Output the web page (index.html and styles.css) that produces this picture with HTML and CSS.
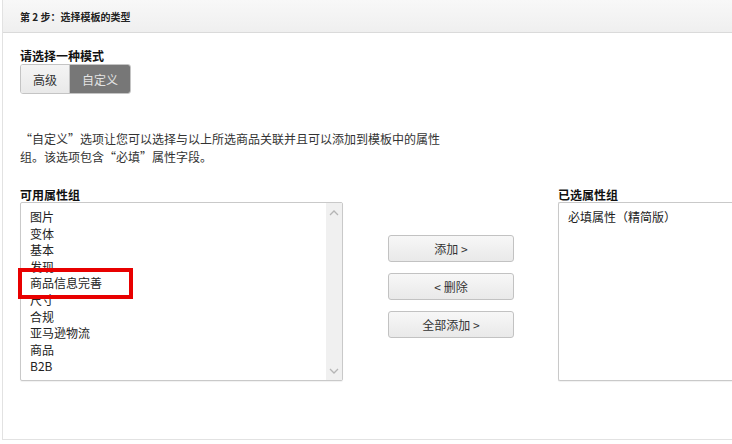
FILE: index.html
```html
<!DOCTYPE html>
<html lang="zh-CN">
<head>
<meta charset="utf-8">
<link rel="stylesheet" href="styles.css">
</head>
<body>
<div class="panel">
  <div class="panel-head">第 2 步：选择模板的类型</div>
  <div class="panel-body">
    <div class="label">请选择一种模式</div>
    <div class="toggle">
      <span class="seg">高级</span>
      <span class="seg active">自定义</span>
    </div>
    <p class="desc">“自定义”选项让您可以选择与以上所选商品关联并且可以添加到模板中的属性<br>组。该选项包含“必填”属性字段。</p>
    <div class="columns">
      <div class="col-left">
        <div class="label small">可用属性组</div>
        <div class="listbox">
          <ul class="items">
            <li>图片</li>
            <li>变体</li>
            <li>基本</li>
            <li>发现</li>
            <li>商品信息完善</li>
            <li>尺寸</li>
            <li>合规</li>
            <li>亚马逊物流</li>
            <li>商品</li>
            <li>B2B</li>
          </ul>
          <div class="scrollbar">
            <svg class="arrow" width="10" height="6" viewBox="0 0 10 6"><path d="M1 5 L5 1 L9 5" fill="none" stroke="#b5b5b5" stroke-width="1.3"/></svg>
            <svg class="arrow" width="10" height="6" viewBox="0 0 10 6"><path d="M1 1 L5 5 L9 1" fill="none" stroke="#b5b5b5" stroke-width="1.3"/></svg>
          </div>
          <div class="highlight"></div>
        </div>
      </div>
      <div class="col-mid">
        <button class="btn">添加 &gt;</button>
        <button class="btn">&lt; 删除</button>
        <button class="btn">全部添加 &gt;</button>
      </div>
      <div class="col-right">
        <div class="label small">已选属性组</div>
        <div class="listbox selected">
          <ul class="items">
            <li>必填属性（精简版）</li>
          </ul>
        </div>
      </div>
    </div>
  </div>
</div>
</body>
</html>
```
FILE: styles.css
```css
html, body {
  margin: 0;
  padding: 0;
  background: #fff;
}
body {
  font-family: "Noto Sans CJK SC", "Liberation Sans", sans-serif;
  color: #333;
  font-size: 12px;
  width: 732px;
  height: 444px;
  overflow: hidden;
}
.panel {
  margin-left: 2px;
  width: 730px;
  height: 440px;
  border-left: 1px solid #e2e2e2;
  border-bottom: 1px solid #e2e2e2;
  box-sizing: border-box;
}
.panel-head {
  height: 32px;
  line-height: 34px;
  background: linear-gradient(#f8f8f8, #efefef);
  border-bottom: 1px solid #dadada;
  padding-left: 17px;
  font-size: 10px;
  font-weight: bold;
  color: #222;
}
.panel-body {
  padding: 15px 0 0 17px;
}
.label {
  font-weight: bold;
  font-size: 12px;
  line-height: 16px;
  color: #111;
}
.label.small {
  line-height: 14px;
}
.toggle {
  display: inline-flex;
  border: 1px solid #c4c4c4;
  border-radius: 3px;
  overflow: hidden;
  height: 28px;
}
.seg {
  display: flex;
  align-items: center;
  justify-content: center;
  font-size: 12px;
}
.seg:first-child {
  width: 48px;
  background: linear-gradient(#f4f4f4, #e9e9e9);
  color: #333;
  border-right: 1px solid #c4c4c4;
}
.seg.active {
  width: 60px;
  background: #777;
  color: #e4e4e4;
}
.desc {
  margin: 36px 0 0 0;
  font-size: 12px;
  line-height: 18px;
  color: #333;
}
.columns {
  display: flex;
  margin-top: 22px;
}
.col-left {
  width: 323px;
}
.listbox {
  position: relative;
  display: flex;
  height: 179px;
  border: 1px solid #c9c9c9;
  border-radius: 2px;
  box-sizing: border-box;
  box-shadow: 0 1px 1px rgba(0,0,0,0.06);
  background: #fff;
}
.items {
  list-style: none;
  margin: 0;
  padding: 6px 0 0 9px;
  flex: 1;
  font-size: 12px;
  line-height: 16.6px;
  color: #222;
}
.scrollbar {
  width: 16px;
  background: #f0f0f0;
  display: flex;
  flex-direction: column;
  justify-content: space-between;
  align-items: center;
  padding: 7px 0 6px;
}
.arrow {
  display: block;
}
.highlight {
  position: absolute;
  left: -3px;
  top: 65px;
  width: 115px;
  height: 31px;
  border: 4px solid #e80000;
  box-sizing: border-box;
}
.col-mid {
  display: flex;
  flex-direction: column;
  gap: 11px;
  margin-left: 45px;
  padding-top: 47px;
  width: 126px;
}
.btn {
  height: 27px;
  width: 126px;
  border: 1px solid #c2c2c2;
  border-radius: 3px;
  background: linear-gradient(#f7f7f7, #e9e9e9);
  font-family: "Noto Sans CJK SC", "Liberation Sans", sans-serif;
  font-size: 12px;
  color: #333;
  padding: 0;
}
.col-right {
  margin-left: 44px;
  flex: 1;
  min-width: 0;
}
.selected {
  border-right: none;
  border-radius: 2px 0 0 2px;
}
```
